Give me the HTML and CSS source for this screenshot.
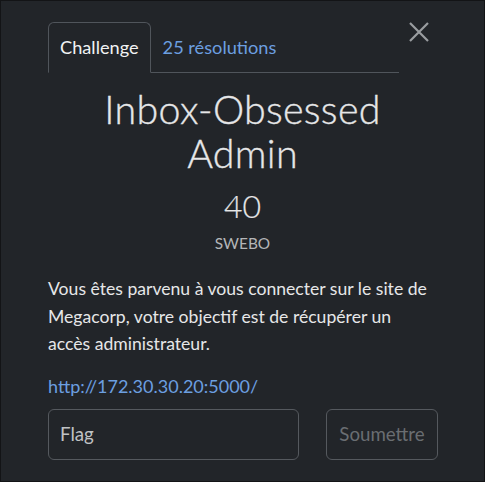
FILE: index.html
```html
<!DOCTYPE html>
<html lang="fr">
<head>
<meta charset="utf-8">
<link rel="stylesheet" href="styles.css">
</head>
<body>
<div class="modal">
  <div class="top">
    <ul class="tabs">
      <li class="tab active">Challenge</li>
      <li class="tab link">25 résolutions</li>
    </ul>
    <button class="close" aria-label="Fermer">
      <svg width="22" height="22" viewBox="0 0 22 22"><path d="M2 2 L20 20 M20 2 L2 20" stroke="#9a9da0" stroke-width="2.2" fill="none"/></svg>
    </button>
  </div>
  <h2 class="name">Inbox-Obsessed<br>Admin</h2>
  <h3 class="value">40</h3>
  <div class="tag">SWEBO</div>
  <p class="desc">Vous êtes parvenu à vous connecter sur le site de Megacorp, votre objectif est de récupérer un accès administrateur.</p>
  <p class="url"><a href="#">http://172.30.30.20:5000/</a></p>
  <form class="submit">
    <input class="flag" type="text" placeholder="Flag">
    <button type="button" class="btn">Soumettre</button>
  </form>
</div>
</body>
</html>
```
FILE: styles.css
```css
* { box-sizing: border-box; }
html, body { margin: 0; height: 100%; }
body {
  background: #222529;
  font-family: Lato, "Noto Sans", sans-serif;
  color: #e6e7e8;
}
.modal {
  height: 482px;
  border: 1px solid #131416;
  padding: 21px 47px 0 47px;
}
.top {
  display: flex;
  align-items: flex-start;
}
.tabs {
  list-style: none;
  margin: 0;
  padding: 0;
  display: flex;
  width: 351px;
  border-bottom: 1px solid #50555b;
}
.tab {
  font-size: 18.2px;
  line-height: 24px;
  padding: 12px 11px 13px;
  margin-bottom: -1px;
  border: 1px solid transparent;
  border-radius: 6px 6px 0 0;
}
.tab.active {
  border-color: #50555b #50555b #222529;
  color: #f1f2f3;
}
.tab.link { color: #6c9fe0; }
.close {
  background: none;
  border: 0;
  padding: 0;
  margin: -2px 0 0 8px;
  width: 24px;
  height: 24px;
  display: flex;
  align-items: center;
  justify-content: center;
}
.name {
  margin: 14px 0 0;
  text-align: center;
  font-weight: 300;
  font-size: 39.4px;
  line-height: 44px;
  letter-spacing: 0.3px;
  -webkit-text-stroke: 0.35px #e6e7e8;
  color: #e6e7e8;
}
.value {
  margin: 13px 0 0;
  text-align: center;
  font-weight: 300;
  font-size: 32px;
  line-height: 36px;
  -webkit-text-stroke: 0.2px #e6e7e8;
}
.tag {
  margin-top: 9px;
  text-align: center;
  font-size: 15.4px;
  color: #b4b6b8;
  line-height: 20px;
}
.desc {
  margin: 22px 0 0;
  font-size: 17.6px;
  line-height: 27.5px;
  width: 385px;
}
.url {
  margin: 17px 0 0;
  font-size: 18px;
}
.url a { color: #6c9fe0; text-decoration: none; }
.submit {
  display: flex;
  justify-content: space-between;
  margin-top: 12px;
  width: 390px;
}
.flag {
  width: 251px;
  height: 51px;
  background: transparent;
  border: 1px solid #55595e;
  border-radius: 6px;
  padding: 0 11px;
  font-family: inherit;
  font-size: 18.7px;
  color: #e6e7e8;
}
.flag::placeholder { color: #c0c2c4; }
.btn {
  width: 112px;
  height: 51px;
  background: transparent;
  border: 1px solid #55595e;
  border-radius: 6px;
  font-family: inherit;
  font-size: 18.7px;
  color: #6a6e72;
  padding: 0;
}
```
